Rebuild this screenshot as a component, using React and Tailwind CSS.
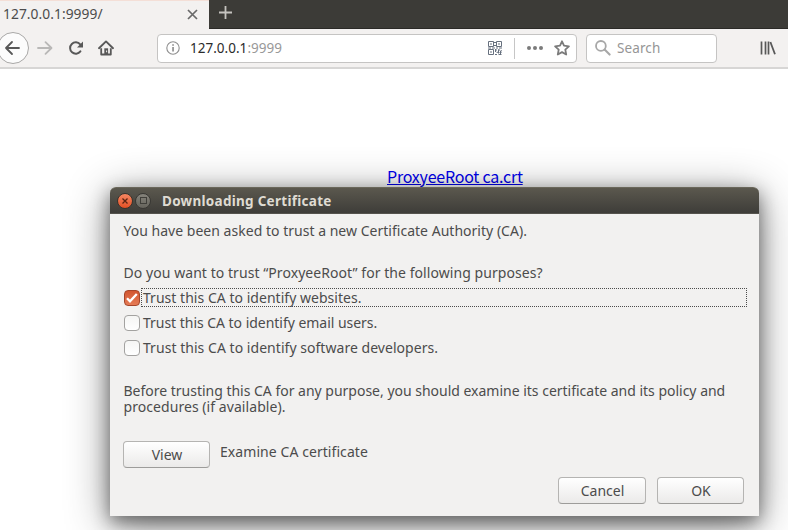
import React from "react";

const BackIcon = () => (
  <svg width="18" height="16" viewBox="0 0 18 16" fill="none" stroke="#585858" strokeWidth="1.8" strokeLinecap="round" strokeLinejoin="round">
    <path d="M15 8H2M8 2L2 8l6 6" />
  </svg>
);

const ForwardIcon = () => (
  <svg width="16" height="16" viewBox="0 0 16 16" fill="none" stroke="#b9b8b7" strokeWidth="1.8" strokeLinecap="round" strokeLinejoin="round">
    <path d="M1 8h13M8.5 2.2l6 5.8-6 5.8" />
  </svg>
);

const ReloadIcon = () => (
  <svg width="16" height="16" viewBox="0 0 16 16">
    <path d="M12.4 11.4A5.7 5.7 0 1 1 12.2 4.4" fill="none" stroke="#585858" strokeWidth="2" strokeLinecap="round" />
    <path d="M15 1.4v6H9z" fill="#585858" />
  </svg>
);

const HomeIcon = () => (
  <svg width="16" height="16" viewBox="0 0 16 16">
    <path d="M1 8.2L8 1.4l7 6.8" fill="none" stroke="#585858" strokeWidth="1.9" strokeLinecap="round" strokeLinejoin="round" />
    <path d="M3.2 8.2v6.3h9.6V8.2" fill="none" stroke="#585858" strokeWidth="1.8" strokeLinejoin="round" />
    <path d="M6.3 14.5V8.3h3.8v6.2z" fill="#585858" />
    <path d="M8.1 10.6h1v1.6h-1z" fill="#f3f1f0" />
  </svg>
);

const InfoIcon = () => (
  <svg width="14" height="14" viewBox="0 0 14 14">
    <circle cx="7" cy="7" r="6.2" fill="none" stroke="#8f8f8f" strokeWidth="1.1" />
    <path d="M6.2 6h1.7v4.6H6.2zM6.2 3.2h1.7v1.6H6.2z" fill="#8f8f8f" />
  </svg>
);

const QrIcon = () => (
  <svg width="14" height="14" viewBox="0 0 14 14" fill="none" stroke="#66707e">
    <path d="M.5.5h5v5h-5zM8.5.5h5v5h-5zM.5 8.5h5v5h-5z" />
    <path d="M2 3h2M10 3h2M2 11h2M6 1.5h2M6 4.5h2M0 7h3M4 7h3M8 7h2M11 7h3M7 9h2M10 9h2M12.5 9.8h1.5M8.5 11.3h2M11.5 11.5h2M7 13.5h2M10.5 13.5h3M7.5 8v3M10.5 8.5v4M12.5 10v3" />
  </svg>
);

const StarIcon = () => (
  <svg width="16" height="16" viewBox="0 0 16 16" fill="none" stroke="#7b7b7b" strokeWidth="1.8" strokeLinejoin="round">
    <path d="M8 1.3l2 4.4 4.9.6-3.6 3.3.9 4.9L8 12.1l-4.2 2.4.9-4.9L1.1 6.3 6 5.7z" />
  </svg>
);

const SearchIcon = () => (
  <svg width="16" height="16" viewBox="0 0 16 16" fill="none" stroke="#a7a7a7">
    <circle cx="5.9" cy="5.9" r="4.9" strokeWidth="1.8" />
    <path d="M9.6 9.6l5 5" strokeWidth="2.1" strokeLinecap="round" />
  </svg>
);

const LibraryIcon = () => (
  <svg width="16" height="14" viewBox="0 0 16 14" fill="none" stroke="#585858">
    <path d="M1.5 .5v13M5.5 .5v13M8.5 .5v13" strokeWidth="1.7" />
    <path d="M10.4 1L15 13.2" strokeWidth="1.8" />
  </svg>
);

function Tabs() {
  return (
    <div className="flex h-[29px] bg-[#3c3b37]">
      <div className="flex w-[209px] items-center justify-between border-t border-[#f4dfd7] bg-[#f3f1f0] pr-[11px] pb-[2px] pl-[3px]">
        <span className="text-[13.8px] tracking-[0.05px] whitespace-nowrap text-[#4c4c4c]">127.0.0.1:9999/</span>
        <svg width="11" height="11" viewBox="0 0 11 11" stroke="#696969" strokeWidth="1.7">
          <path d="M1 1l9 9M10 1L1 10" />
        </svg>
      </div>
      <div className="flex flex-1 items-center border-b border-[#2b2a27] pb-[3px] pl-[10px]">
        <svg width="13" height="13" viewBox="0 0 13 13" stroke="#c5c3bf" strokeWidth="1.8">
          <path d="M6.5 0v13M0 6.5h13" />
        </svg>
      </div>
    </div>
  );
}

function Toolbar() {
  return (
    <div className="flex h-[40px] items-center border-b-2 border-[#d7d6d5] bg-[#f3f1f0]">
      <div className="-ml-[3px] flex size-8 shrink-0 items-center justify-center rounded-full border border-[#a9a8a7] bg-[#fcfcfc]">
        <BackIcon />
      </div>
      <div className="ml-2 flex items-center gap-[14.5px]">
        <ForwardIcon />
        <ReloadIcon />
        <HomeIcon />
      </div>
      <div className="ml-[43px] flex h-[29px] w-[420px] items-center rounded border border-[#c5c4c3] bg-white pr-[6px] pl-2">
        <InfoIcon />
        <span className="ml-[10px] pt-px text-[13.5px] tracking-[0.02px] text-[#999]">
          <span className="text-[#2b2b2b]">127.0.0.1</span>:9999
        </span>
        <div className="ml-auto flex items-center">
          <QrIcon />
          <div className="ml-3 h-[21px] w-px bg-[#c6c6c6]" />
          <div className="ml-3 flex gap-[2px]">
            <i className="size-1 rounded-full bg-[#7b7b7b]" />
            <i className="size-1 rounded-full bg-[#7b7b7b]" />
            <i className="size-1 rounded-full bg-[#7b7b7b]" />
          </div>
          <div className="ml-[11px]"><StarIcon /></div>
        </div>
      </div>
      <div className="ml-[9px] flex h-[29px] w-[131px] items-center rounded border border-[#c5c4c3] bg-white pl-2">
        <SearchIcon />
        <span className="ml-[6px] pt-px text-[13.5px] tracking-[0.1px] text-[#969696]">Search</span>
      </div>
      <div className="ml-[43px]"><LibraryIcon /></div>
    </div>
  );
}

function CheckRow({ checked, children, labelClass }) {
  return (
    <div className="flex h-[25px] items-center">
      {checked ? (
        <div className="flex size-4 shrink-0 items-center justify-center rounded border border-[#a5452a] bg-linear-to-b from-[#d25630] to-[#e57b55]">
          <svg width="12" height="12" viewBox="0 0 12 12" fill="none" stroke="#fff" strokeWidth="2.3">
            <path d="M1 6.2l3 3.2L10.8 2" />
          </svg>
        </div>
      ) : (
        <div className="size-4 shrink-0 rounded border border-[#a3a2a0] bg-linear-to-b from-[#f5f5f4] to-white" />
      )}
      <div className={"ml-px flex h-[19px] flex-1 items-center border border-dotted pl-px " + (checked ? "border-[#4c4c4c]" : "border-transparent")}>
        <span className={"whitespace-nowrap " + labelClass}>{children}</span>
      </div>
    </div>
  );
}

function Button({ className, children }) {
  return (
    <button className={"h-[27px] rounded border border-[#b5b4b2] border-b-[#9d9c9a] bg-linear-to-b from-white to-[#ebeae9] pl-px text-center leading-[24px] " + className}>
      {children}
    </button>
  );
}

function Dialog() {
  return (
    <div className="absolute top-[187px] left-[110px] flex h-[329px] w-[649px] flex-col rounded-t-md bg-[#f2f1f0] text-[14px] text-[#4c4c4c] shadow-[0_8px_44px_0px_rgba(0,0,0,0.45),0_6px_18px_0px_rgba(0,0,0,0.45)]">
      <div className="flex h-[27px] shrink-0 items-center rounded-t-md border-t border-b border-t-[#6a675b] border-b-[#55534d] bg-linear-to-b from-[#5b584e] to-[#3e3d39] pl-[7px]">
        <div className="flex size-4 items-center justify-center rounded-full border border-[#3a332c] bg-linear-to-b from-[#f58661] to-[#e24f22]">
          <svg width="6" height="6" viewBox="0 0 6 6" stroke="#5c2412" strokeWidth="1.3"><path d="M.5.5l5 5M5.5.5l-5 5" /></svg>
        </div>
        <div className="ml-[2px] flex size-4 items-center justify-center rounded-full border border-[#393834] bg-linear-to-b from-[#85837b] to-[#66645c]">
          <i className="size-[7px] border border-[#403f3a]" />
        </div>
        <span className="ml-[11px] pt-[2px] text-[13.5px] font-bold tracking-[0.28px] whitespace-nowrap text-[#dfdbd2]">Downloading Certificate</span>
      </div>
      <div className="flex flex-1 flex-col pr-3 pl-[14px]">
        <p className="mt-2 -ml-[0.5px] h-[18px] leading-[18px] tracking-[0.02px] whitespace-nowrap">You have been asked to trust a new Certificate Authority (CA).</p>
        <p className="mt-6 -ml-[0.5px] h-[18px] leading-[18px] tracking-[0.06px] whitespace-nowrap">Do you want to trust “ProxyeeRoot” for the following purposes?</p>
        <div className="mt-[3px]">
          <CheckRow checked labelClass="tracking-[0.03px]">Trust this CA to identify websites.</CheckRow>
          <CheckRow labelClass="tracking-[-0.03px]">Trust this CA to identify email users.</CheckRow>
          <CheckRow labelClass="tracking-[0.04px]">Trust this CA to identify software developers.</CheckRow>
        </div>
        <div className="mt-[23px] -ml-[0.5px] h-8 leading-4 whitespace-nowrap">
          <p className="tracking-[-0.01px]">Before trusting this CA for any purpose, you should examine its certificate and its policy and</p>
          <p className="tracking-[0.06px]">procedures (if available).</p>
        </div>
        <div className="mt-[26px] -ml-px flex">
          <Button className="w-[87px]">View</Button>
          <span className="ml-[10px] leading-[21px] tracking-[0.07px]">Examine CA certificate</span>
        </div>
        <div className="mt-[9px] mr-[3px] flex justify-end gap-[11px]">
          <Button className="w-[88px]">Cancel</Button>
          <Button className="w-[87px]">OK</Button>
        </div>
      </div>
    </div>
  );
}

export default function App() {
  return (
    <div className="relative h-[530px] w-[788px] overflow-hidden bg-white font-['Noto_Sans',sans-serif]">
      <Tabs />
      <Toolbar />
      <div className="flex pt-[95px] pl-[387px]">
        <a className="font-['Noto_Sans_CJK_SC',sans-serif] text-[16px] leading-[24px] tracking-[-0.23px] whitespace-nowrap text-[#0000ee] underline">ProxyeeRoot ca.crt</a>
      </div>
      <Dialog />
    </div>
  );
}
